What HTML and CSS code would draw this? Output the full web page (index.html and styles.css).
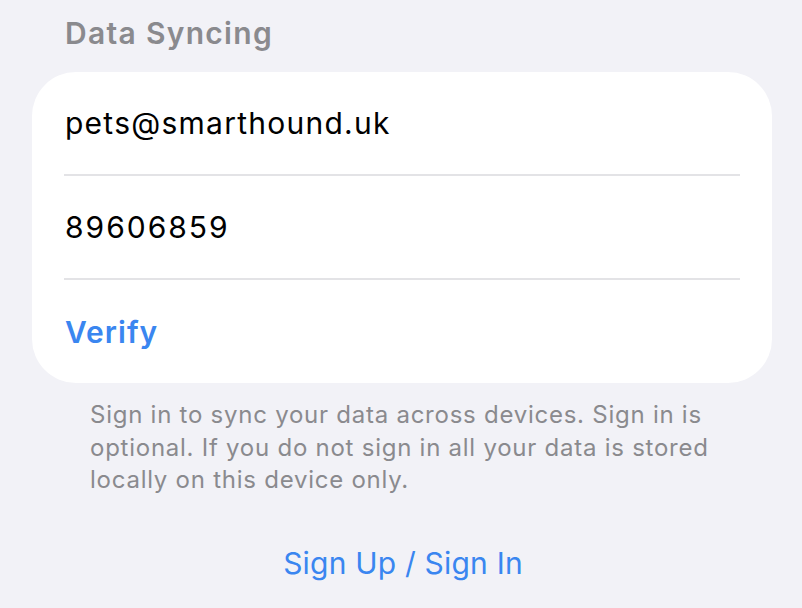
FILE: index.html
```html
<!DOCTYPE html>
<html lang="en">
<head>
<meta charset="utf-8">
<link rel="stylesheet" href="styles.css">
</head>
<body>
<div class="screen">
  <h2 class="section-title">Data Syncing</h2>
  <div class="card">
    <div class="row email">pets@smarthound.uk</div>
    <div class="sep"></div>
    <div class="row code">89606859</div>
    <div class="sep"></div>
    <div class="row action">Verify</div>
  </div>
  <p class="footnote">Sign in to sync your data across devices. Sign in is optional. If you do not sign in all your data is stored locally on this device only.</p>
  <div class="signin">Sign Up / Sign In</div>
</div>
</body>
</html>
```
FILE: styles.css
```css
html, body {
  margin: 0;
  padding: 0;
  background: #f2f2f7;
}
.screen {
  width: 802px;
  height: 608px;
  overflow: hidden;
  font-family: Inter, "Liberation Sans", sans-serif;
  box-sizing: border-box;
  padding: 14px 30px 0 32px;
}
.section-title {
  margin: 0 0 0 33px;
  font-size: 30px;
  font-weight: 600;
  letter-spacing: 1.3px;
  color: #8a8a8e;
  line-height: 38px;
  height: 58px;
}
.card {
  background: #ffffff;
  border-radius: 44px;
  width: 740px;
  padding-left: 32px;
  box-sizing: border-box;
  padding-right: 32px;
}
.row {
  height: 102px;
  display: flex;
  align-items: center;
  font-size: 30px;
  color: #000;
  padding-left: 1px;
}
.row.email {
  letter-spacing: 1.25px;
}
.row.code {
  letter-spacing: 2px;
}
.row.action {
  height: 103px;
  color: #3a86f0;
  font-weight: 600;
  letter-spacing: 1px;
}
.sep {
  height: 2px;
  background: #e3e3e6;
}
.footnote {
  margin: 16px 40px 0 58px;
  font-size: 24px;
  line-height: 32.5px;
  letter-spacing: 0.75px;
  color: #8a8a8e;
}
.signin {
  margin-top: 48px;
  text-align: center;
  font-size: 30px;
  letter-spacing: 0.2px;
  color: #3a86f0;
  padding-left: 2px;
}
```
